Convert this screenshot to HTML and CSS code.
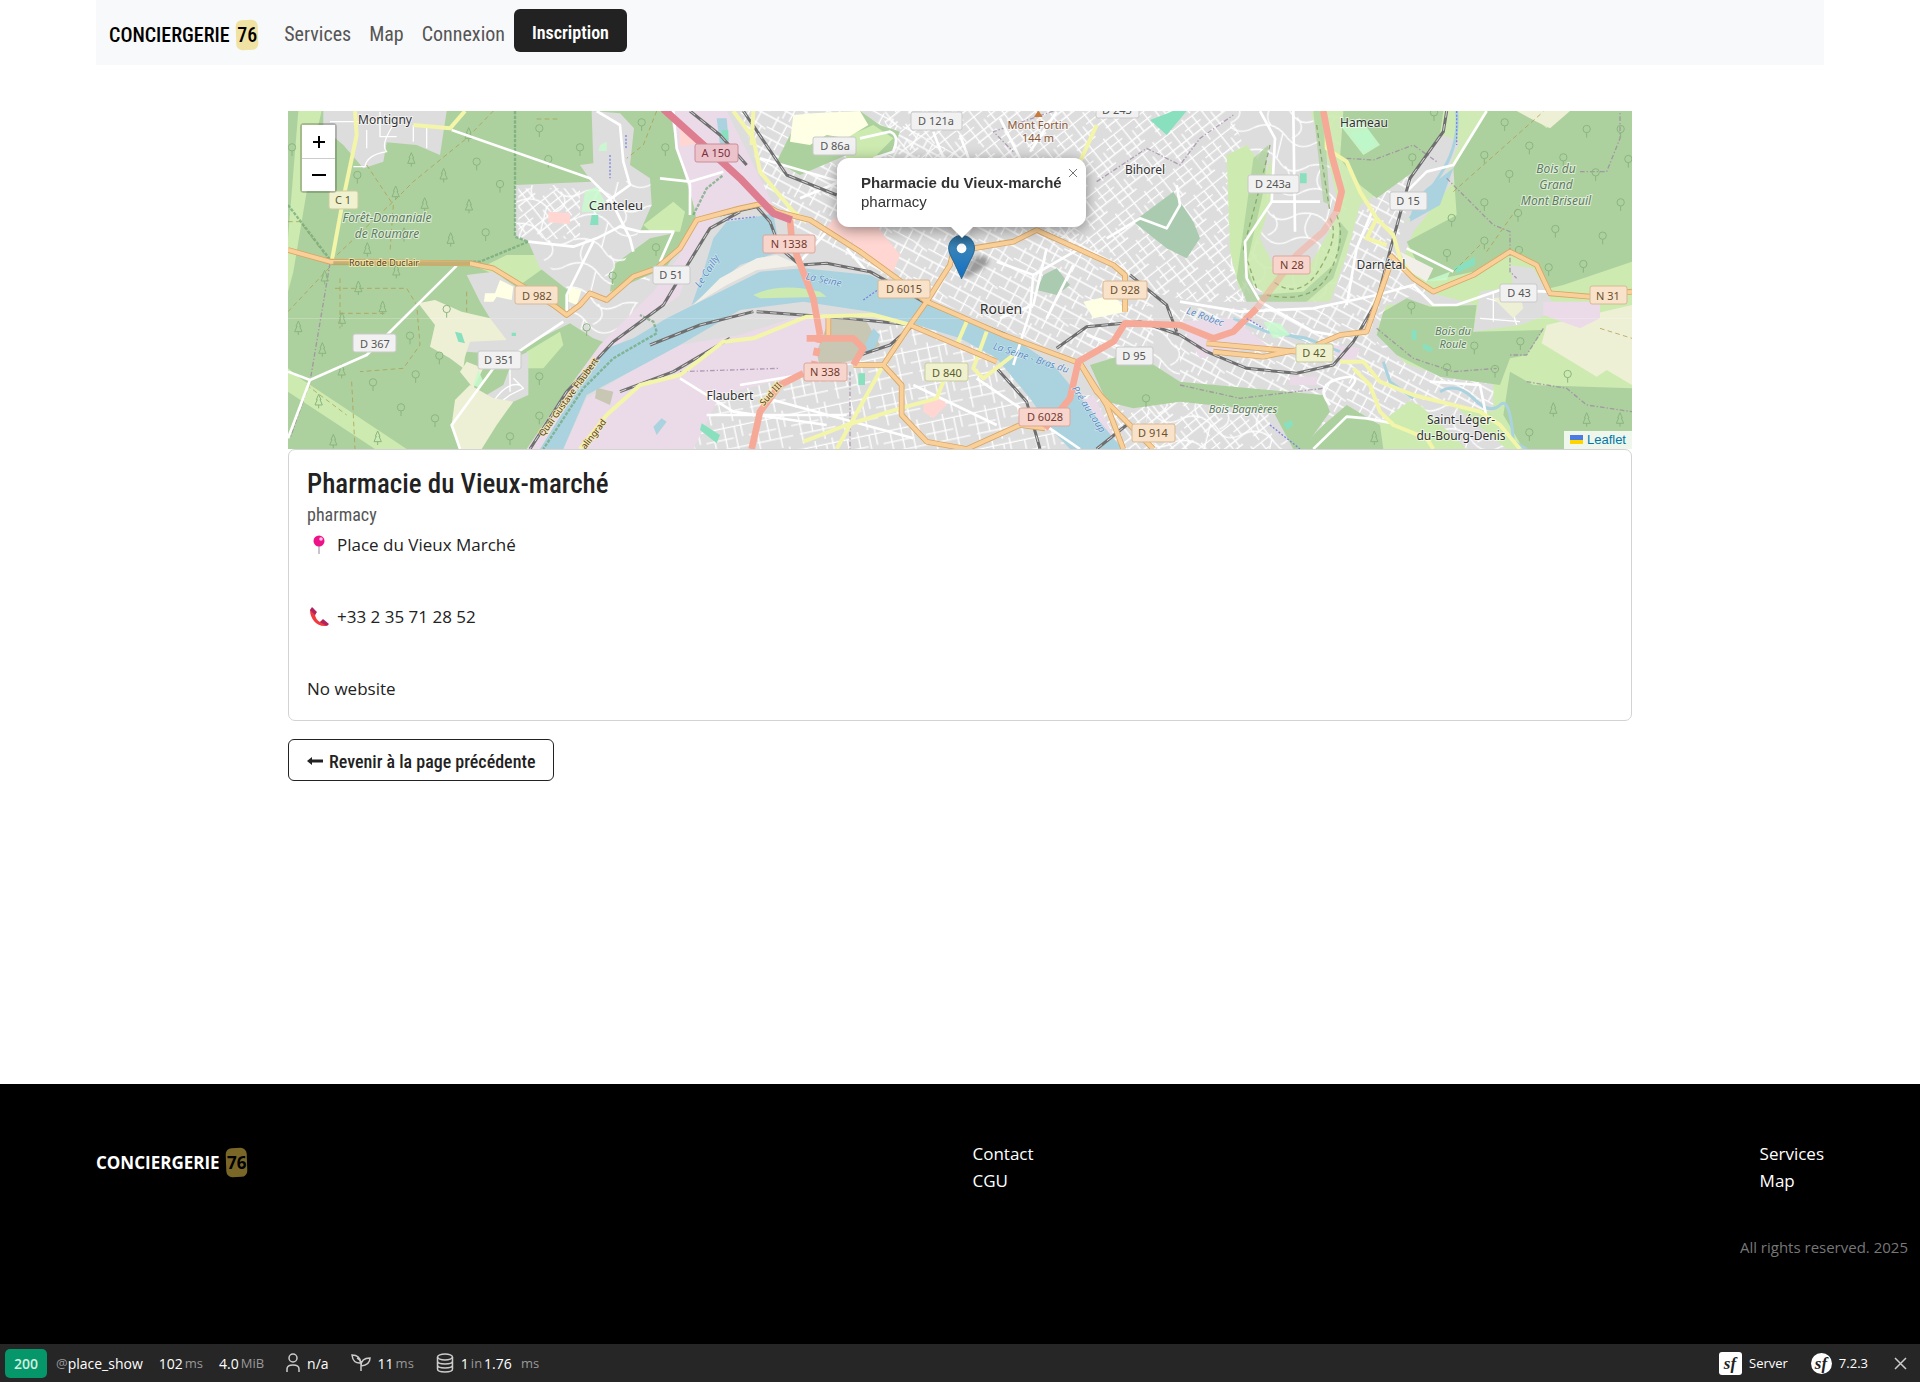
FILE: index.html
```html
<!DOCTYPE html>
<html lang="fr">
<head>
<meta charset="utf-8">
<meta name="viewport" content="width=device-width, initial-scale=1">
<title>Pharmacie du Vieux-marché</title>
<link rel="stylesheet" href="styles.css">
</head>
<body>
<header class="navbar">
  <a class="brand" href="#">CONCIERGERIE <span class="pill">76</span></a>
  <nav class="nav">
    <a href="#">Services</a>
    <a href="#">Map</a>
    <a href="#">Connexion</a>
  </nav>
  <button class="btn-dark" type="button">Inscription</button>
</header>

<main class="content">
  <section class="map" aria-label="Carte">
    <svg class="tiles" viewBox="8 6 1344 338" preserveAspectRatio="xMidYMid slice">
      <defs>
        <pattern id="streets" width="120" height="96" patternUnits="userSpaceOnUse" patternTransform="rotate(28)">
          <path d="M0 12H120M0 44H70L120 52M0 72H120M18 0V44M52 12V96M84 0V72M104 48V96M30 72V96" class="st"/>
        </pattern>
        <pattern id="streets2" width="110" height="100" patternUnits="userSpaceOnUse" patternTransform="rotate(-38)">
          <path d="M0 10H110M0 34H60M0 58H110M40 80H110M14 0V58M46 10V100M78 0V100M98 34V80" class="st"/>
        </pattern>
        <pattern id="streets3" width="130" height="110" patternUnits="userSpaceOnUse" patternTransform="rotate(-12)">
          <path d="M0 16H130M0 50H84M20 80H130M26 16V110M60 0V80M92 16V110M112 0V50" class="st"/>
        </pattern>
        <pattern id="streets4" width="190" height="150" patternUnits="userSpaceOnUse" patternTransform="rotate(14)">
          <path d="M0 30Q60 0 100 40T190 30M0 110Q50 70 100 110T190 110M40 20Q20 70 50 90M120 48Q160 80 120 112M90 106V150M90 0V34" class="st"/>
        </pattern>
        <g id="leaf"><circle cy="-8" r="11"/><path d="M0 3V18"/></g>
        <g id="pine"><path d="M0 -22L-7 -6H-4L-11 10H11L4 -6H7ZM0 10V20"/></g>
        <g id="tracks">
          <path d="M3500 18L3490 80L3390 220L3340 400L3290 590L3220 710L3160 780L3050 805L2900 790L2780 740L2700 690L2580 650L2420 665L2330 730"/>
          <path d="M1230 18L1320 90L1400 180M1390 18L1520 210L1670 270M1380 320L1290 370L1210 500L1150 600L1000 710L860 860L750 1032M1320 330L1430 305L1470 350L1500 430L1560 480L1640 475L1770 500L1930 590L2180 690M1430 620L1700 640L1900 660L1830 720L1740 750M1110 720L1260 660L1420 620M2150 790L2240 890L2280 1032M2450 1032L2540 960M1020 860L1180 800L1350 700M2550 510L2660 600L2690 680"/>
        </g>
      </defs>
      <g transform="scale(.333333)">
        <rect x="0" y="0" width="4080" height="1060" fill="#dedddd"/>
        <!-- street grids -->
        <path fill="url(#streets)" d="M1380 18H1800L2300 300L2620 560V760H2380L1900 560L1480 330Z"/>
        <path fill="url(#streets2)" d="M1800 18H2850L2960 300L2900 620L2600 560L2500 480L2300 380L1900 250Z"/>
        <path fill="url(#streets3)" d="M1260 860L1900 640L2160 760L2450 1060H1240Z"/>
        <path fill="url(#streets4)" d="M2600 600H3300L3700 860V1060H2600Z"/>
        <path fill="url(#streets2)" d="M2250 860L2960 900L2990 1060H2400Z"/>
        <path fill="url(#streets4)" d="M2850 18H3200V600H2850Z"/>
        <!-- light grass -->
        <g fill="#cdebb0">
          <path d="M3110 18H3700L3520 180L3420 320L3320 400L3200 590L2980 590L2900 520L2900 400L3000 60Z" opacity=".9"/>
          <path d="M3400 380L3560 180L3660 18H4056V1032H3680L3400 800L3290 680Z"/>
          <path d="M2840 150L2900 120L2960 200L2960 330L2900 470L2880 560L2850 440Z"/>
          <path d="M3250 840L3420 900L3560 1032H3300L3180 940Z"/>
        </g>
        <path fill="#dedddd" d="M2960 18H3090L3150 190L3180 320L3090 480L2990 500L2940 400L2980 250Z"/>
        <path fill="url(#streets4)" d="M2960 18H3090L3150 190L3180 320L3090 480L2990 500L2940 400L2980 250Z"/>
        <path fill="#dedddd" d="M3240 300L3400 200L3490 90L3540 110L3490 230L3370 360L3340 440L3440 560L3590 600H3300L3270 680L3330 760L3480 810L3640 830V920L3400 880L3290 960L3200 900L3140 960L3100 880L2700 840V590H3150L3200 450Z"/>
        <path fill="url(#streets)" d="M3240 300L3400 200L3370 360L3340 440L3440 560L3300 600L3270 680L3330 760L3480 810L3640 830V920L3400 880L3290 960L3200 900L3140 960L3100 880L2700 840V610H3150L3200 450Z"/>
        <!-- forest -->
        <g fill="#add19e">
          <path d="M24 18H1170L1190 130L1230 240L1250 350L1150 500L1050 640L960 740L850 880L750 1032H24Z"/>
          <path d="M3190 18H3490L3480 90L3400 200L3290 280L3240 240L3180 160Z"/>
          <path d="M3620 18H3740L3800 70L3850 18H4056V470L3850 540L3810 550L3760 480L3690 440L3580 500L3440 530L3380 410L3530 330L3520 190Z"/>
          <path d="M3310 620L3380 580L3450 605L3590 600L3580 680L3790 675L3740 750L3690 760L3660 840L3480 815L3350 750L3290 690Z"/>
          <path d="M3690 800L3760 840L4056 850V1032H3730L3670 930Z"/>
          <path d="M2430 780L2560 740L2700 830L3130 870L3150 920L3070 1032H3040L2980 920L2700 890L2560 910L2480 890Z"/>
          <path d="M1560 30L1740 18L1800 60L1860 80L1830 150L1700 150L1560 210L1490 170Z"/>
          <path d="M3130 960L3200 900L3300 960L3310 1032H3060Z"/>
          <path d="M2920 160L2965 120L2950 260L2900 480L2930 570L3070 560L3170 470L3180 350L3205 380L3160 520L3080 590H2900L2870 520Z" opacity=".8"/>
          <path d="M3100 18H3130L3150 300L3130 290Z" opacity=".7"/>
        </g>
        <g fill="#aacbaf"><path d="M2560 350L2680 260L2740 350L2760 400L2720 460L2660 430Z"/><path d="M2290 510L2330 490L2370 540L2330 570L2270 555Z"/></g>
        <g fill="#cdebb0">
          <path d="M55 18H125L110 80L40 500L24 560V400Z"/><path d="M24 790L60 820L380 1032H285L24 860Z"/>
          <path d="M600 490L680 450L770 450L790 490L720 540Z"/><path d="M1090 360L1180 290L1215 320L1200 380L1110 378Z"/>
          <path d="M840 680L850 720L790 790L735 790L740 740Z"/><path d="M1690 100L1780 60L1840 100L1760 180L1700 170Z"/>
        </g>
        <!-- Canteleu and Montigny -->
        <g fill="#dedddd">
          <path d="M935 18L1020 25L1062 70L1050 180L1110 220L1115 300L1080 380L1180 385L1110 400L1000 480L990 560L1120 505L1130 550L1050 640L980 715L940 700L870 655L740 720L690 750L560 740L545 690L630 640L600 590L560 510L640 500L730 560L860 620L870 560L780 490L745 410L705 395V240L935 230L900 180L940 175Z"/>
          <path d="M130 18H500L480 150L410 120L320 112L310 170L250 190L190 120L130 70Z"/>
          <path d="M700 760L745 740L745 870L700 890L640 910L620 870L670 840Z"/>
          <path d="M3690 480L3760 490L3800 560L3830 620L3720 660L3580 680L3600 560L3700 545Z"/>
        </g>
        <path fill="url(#streets4)" d="M705 240H935L1110 220L1115 300L990 560L1120 505L1050 640L980 715L870 655V560L745 410L705 395Z"/>
        <path fill="url(#streets2)" d="M715 250H900L900 400L745 405L715 390Z"/>
        <g class="st"><path d="M260 75V130M300 20V95H350M400 60V110M440 60V130M150 50H300M340 60Q300 120 320 140Q260 150 255 185H220M690 790V860M640 890Q680 830 720 840M650 900L690 870L730 850L700 820M3600 640L3720 650M3620 580L3700 600M3640 560V650M3680 560L3710 660"/></g>
        <!-- farmland -->
        <g fill="#eef0d5">
          <path d="M415 595L465 585L545 620L630 640L680 705L570 710L555 755L550 790L510 760L450 725L465 660Z"/>
          <path d="M540 800L560 770L610 790L580 850Z"/><path d="M525 885L570 840L640 880L700 890L650 960L605 1032H540L515 960Z"/>
          <path d="M3800 660L4056 600V840L3980 795L3950 815L3785 715Z"/><path d="M3710 18H3870L3810 70L3770 50Z"/><path d="M3640 580L3720 570L3730 610L3700 640Z"/>
        </g>
        <g fill="#ffffe5"><path d="M660 525L700 545L695 585L650 575L640 590L612 590L615 565L645 565Z"/><path d="M1600 25L1740 18L1765 60L1700 100L1640 90L1590 120L1530 110L1540 30Z"/><path d="M865 545L905 555L890 600L865 590Z"/><path d="M2410 590L2500 570L2540 620L2440 640Z"/></g>
        <!-- industrial -->
        <g fill="#ebdbe8">
          <path d="M1175 18H1340L1480 300L1400 310L1320 330L1250 420L1200 570L1060 670L960 790L800 1032H740L850 870L960 720L1120 560L1200 450L1250 330L1190 130Z"/>
          <path d="M1380 690L1600 620L1720 640L1600 800L1320 870L1240 1032H850L920 880L1050 800L1200 720Z"/>
          <path d="M2700 650L2860 640L2960 720L2760 760Z"/><path d="M3160 720L3240 730L3220 780L3170 760Z"/><path d="M3790 590L3960 590L3960 640L3900 670L3790 630Z"/><path d="M2390 900L2440 870L2520 1032H2460Z"/><path d="M3030 815H3110V840H3030Z"/>
        </g>
        <path fill="#ffd6d1" d="M805 320L870 325V358L805 352ZM1700 380L1780 350L1860 450L1840 500L1740 450ZM1660 340L1730 370L1710 420L1640 370ZM1930 890L1980 870L2000 900L1960 940L1930 920ZM1200 70L1280 110L1200 125Z"/>
        <path fill="#c7c7b4" d="M950 848L1000 860L990 900L945 880ZM1650 640L1760 650L1800 720L1740 760L1620 790L1610 740Z"/>
        <!-- water -->
        <g fill="#aad3df">
          <path d="M1300 400L1340 350L1380 345L1480 325L1500 440L1380 480L1320 530L1235 600L1270 500Z"/>
          <path d="M780 1032L880 870L980 730L1060 700L1160 640L1320 560L1440 500L1570 490L1770 510L1930 590L2170 680L2320 780L2420 900L2500 1000L2530 1032H2370L2320 980L2250 880L2150 760L2040 700L1880 650L1770 620L1570 590L1380 615L1200 720L1050 800L920 870L850 1032Z"/>
          <path d="M1310 40H1340L1350 150L1320 120ZM3400 290L3440 250L3520 190L3480 300L3390 350ZM3000 690Q3070 700 3130 740L3100 720L2990 670ZM1120 965L1145 940L1160 950L1130 990ZM1780 670L1800 690L1780 740L1740 750Z"/>
        </g>
        <path class="stream" d="M2860 640L2960 680L3080 700L3180 740M3480 860Q3530 830 3580 880T3660 900T3700 1010L3740 1032M3530 18Q3540 120 3480 210T3390 340M3310 770L3330 830L3400 880"/>
        <path fill="#f2efe9" d="M1240 600L1320 520L1430 460L1490 450L1560 480L1430 495L1340 540ZM3360 440L3460 490L3440 530L3390 500Z"/>
        <path fill="#cdebb0" d="M1420 570Q1500 530 1620 560L1640 575L1440 580Z"/>
        <!-- pitches, parks -->
        <g fill="#88e0be"><path d="M525 680L545 685L555 715L535 710ZM935 330H955V360H930ZM1325 75H1345V105H1325ZM695 683H708V693H695ZM3060 205H3080V235H3060ZM3215 85L3270 75L3285 120L3250 140ZM3520 490L3585 455V480L3530 505ZM3395 675H3410V705H3395ZM3430 715L3460 730L3450 742L3428 730ZM1735 805H1755V840H1735ZM1265 955L1320 990L1310 1015L1260 975ZM3010 955L3035 945L3040 960L3020 975ZM2610 45L2680 18H2720L2660 90Z"/></g>
        <g fill="#c8facc"><path d="M915 260L950 245L975 290L960 320H905L910 290ZM960 120L980 110V138H955ZM3430 530L3510 500L3500 525ZM580 840L595 795L610 830L600 850ZM2950 650L3000 655L3030 690L2980 700ZM3180 60L3240 40L3300 120L3250 150Z" opacity=".85"/></g>
        <!-- forest paths -->
        <path class="track" d="M24 350H60L150 470L360 270L400 230L560 100L640 18M260 180L340 300L330 440M165 550H380L410 600L420 720L370 790L240 800M165 470L24 620M180 520V670M215 830L225 1032M80 840L200 930M180 625H320M560 560L560 620M770 42H840M1130 18L1090 120L1040 160M3520 260L3790 20M3620 440L3690 340L3720 300M3600 420L3520 500M3960 670L4056 700"/>
        <path class="track dark" d="M3170 330Q3200 400 3150 500T2960 570M3110 60Q3130 200 3150 320M2970 120Q2940 250 2890 430L2930 550M3150 340Q3180 390 3120 490T2980 530"/>
        <path class="edge" d="M24 300L155 470M705 18V395L745 410L600 470L160 475M1130 680L1120 650L1080 630M1130 685L1000 760L910 850L790 1032M1240 330L1280 250L1330 210"/>
        <path class="bound" d="M150 475L90 830L30 1000M3200 160L3280 165L3400 120L3470 170M3500 220L3640 360L3690 380V500L3710 520M3790 670L3740 750L3690 750M3290 670L3400 760L3520 800L3650 790M3900 200H3980L4020 100V18M3740 830L3860 850L3920 900L4056 920M2700 840L2880 880L3130 850M2320 18L2140 80L2200 140M2450 230L2600 130L2700 180L2760 100L2860 30M1710 800V1032M1200 800L1500 790"/>
        <!-- trees -->
        <g class="trees">
          <use href="#leaf" x="36" y="135"/><use href="#leaf" x="232" y="218"/><use href="#leaf" x="590" y="178"/><use href="#leaf" x="660" y="245"/><use href="#leaf" x="778" y="78"/><use href="#leaf" x="900" y="135"/><use href="#leaf" x="805" y="170"/><use href="#leaf" x="617" y="390"/><use href="#leaf" x="390" y="700"/><use href="#leaf" x="500" y="620"/><use href="#leaf" x="279" y="840"/><use href="#leaf" x="407" y="816"/><use href="#leaf" x="363" y="915"/><use href="#leaf" x="465" y="948"/><use href="#leaf" x="478" y="760"/><use href="#leaf" x="690" y="1002"/><use href="#leaf" x="778" y="822"/><use href="#leaf" x="920" y="675"/><use href="#leaf" x="1156" y="135"/><use href="#leaf" x="1128" y="435"/><use href="#leaf" x="998" y="520"/><use href="#leaf" x="1085" y="60"/><use href="#leaf" x="778" y="940"/>
          <use href="#pine" x="394" y="165"/><use href="#pine" x="491" y="212"/><use href="#pine" x="347" y="265"/><use href="#pine" x="434" y="300"/><use href="#pine" x="567" y="305"/><use href="#pine" x="512" y="405"/><use href="#pine" x="262" y="435"/><use href="#pine" x="349" y="500"/><use href="#pine" x="235" y="550"/><use href="#pine" x="134" y="518"/><use href="#pine" x="308" y="610"/><use href="#pine" x="186" y="645"/><use href="#pine" x="55" y="670"/><use href="#pine" x="127" y="735"/><use href="#pine" x="185" y="800"/><use href="#pine" x="116" y="890"/><use href="#pine" x="293" y="1000"/><use href="#pine" x="160" y="1010"/><use href="#pine" x="566" y="90"/><use href="#pine" x="372" y="390"/>
          <use href="#leaf" x="3674" y="60"/><use href="#leaf" x="3748" y="130"/><use href="#leaf" x="3613" y="158"/><use href="#leaf" x="3688" y="215"/><use href="#leaf" x="3850" y="165"/><use href="#leaf" x="3920" y="80"/><use href="#leaf" x="3947" y="210"/><use href="#leaf" x="4022" y="300"/><use href="#leaf" x="4045" y="170"/><use href="#leaf" x="4022" y="80"/><use href="#leaf" x="3613" y="300"/><use href="#leaf" x="3714" y="332"/><use href="#leaf" x="3826" y="380"/><use href="#leaf" x="3968" y="400"/><use href="#leaf" x="3910" y="485"/><use href="#leaf" x="3806" y="495"/><use href="#leaf" x="3717" y="443"/><use href="#leaf" x="3613" y="415"/><use href="#leaf" x="3515" y="347"/><use href="#leaf" x="3501" y="452"/><use href="#leaf" x="3397" y="165"/><use href="#leaf" x="3394" y="610"/><use href="#leaf" x="3583" y="730"/><use href="#leaf" x="3721" y="717"/><use href="#leaf" x="3501" y="795"/><use href="#leaf" x="3645" y="800"/><use href="#leaf" x="3863" y="815"/><use href="#leaf" x="3748" y="990"/><use href="#leaf" x="3462" y="30"/><use href="#leaf" x="2598" y="888"/>
          <use href="#pine" x="3820" y="915"/><use href="#pine" x="3920" y="945"/><use href="#pine" x="4020" y="945"/><use href="#pine" x="3283" y="1000"/>
        </g>
        <!-- white roads -->
        <g class="road">
          <path d="M515 75L930 220L990 280L1050 400L1060 440"/><path d="M530 482L260 750L90 825L24 1000M90 825L24 800"/><path d="M850 650L640 790L515 960L540 1032"/><path d="M745 410L880 425L950 400L1020 365L1080 380L1180 380L1140 470"/><path d="M950 18L1020 60L1030 170L1050 240L980 290"/><path d="M860 620L860 570L940 410"/><path d="M1180 18L1190 130L1230 240V330M1140 220L1230 230L1330 200"/>
          <path d="M2940 18L2985 100L2975 290L2895 410L2900 520L2940 590L3100 680L3160 690M3040 18L3045 380M2975 290H3120"/><path d="M2700 590L2880 620L3100 610L3290 570"/><path d="M3620 18L3520 180L3440 200L3380 260"/><path d="M3290 570L3400 540L3460 600L3530 600L3660 555L3810 560"/><path d="M3100 1032L3200 935L3260 940L3340 955"/><path d="M3380 430L3520 500M3280 310L3230 430L3200 600"/><path d="M2150 470L2260 510L2250 620L2200 780M2260 510L2400 430M2420 690L2560 740M1380 840L1560 810M2300 640L2380 480M2480 400L2580 340L2660 370L2700 300L2690 240"/><path d="M2160 640L2260 600L2300 430M1560 470L1640 380M1700 430L1760 500M1460 880L1900 1000M1900 840L2150 960M2090 820L2400 1032M1280 930H1700M1200 820L1360 920L1640 960"/><path d="M1440 160L1680 230L1560 280M1740 100L1830 80Q1860 90 1840 140L1780 160M2040 90L2080 200M1960 80L1990 160M2160 40L2220 160M2250 140L2330 20"/><path d="M3200 860Q3260 800 3180 820T3150 900M3450 830L3600 840L3620 940"/>
        </g>
        <!-- rail -->
        <use href="#tracks" class="rail"/>
        <use href="#tracks" class="rail-dash"/>
        <!-- coloured roads, casing then fill -->
        <g class="road yellow">
          <path d="M225 18L230 90L190 280L155 470"/><path d="M555 18L510 70L400 60"/><path d="M900 1032L980 930L1080 840L1200 810L1330 710L1420 700L1580 635L1780 630L1890 660"/><path d="M1360 18L1420 100L1440 200L1540 320L1580 350M1420 18L1415 120"/><path d="M1670 1032L1810 780M1990 830L1970 880L1860 910L1700 960L1570 1010"/><path d="M2120 680L2080 790L2110 820L2200 750"/><path d="M3140 60L3140 130L3200 170L3240 260L3290 340L3340 390L3360 460L3400 520M3290 340L3260 400L3320 420"/><path d="M3180 770H3250L3300 830L3400 870L3600 920L3660 960L3720 1032"/><path d="M3220 790L3270 840L3300 920L3340 960L3440 1000L3460 1032"/><path d="M2450 60L2400 170"/><path d="M2060 650L2030 720"/>
        </g>
        <g class="case">
          <path d="M24 435L150 470L570 475L640 490L730 545L820 600L860 630L900 600L930 565L980 585L1060 515L1130 490L1200 430L1250 345L1380 310L1450 295L1530 345"/>
          <path d="M1490 320L1590 345L1740 440L1850 520L1940 590L2170 690L2400 775L2450 860L2540 950L2620 1032"/><path d="M1940 590L2010 480L2020 440L2200 410L2270 375L2500 480L2535 510V620"/><path d="M1940 590L1890 660L1810 780H1720M1810 780L1865 840V930L1940 1010L2060 1032L2220 960L2295 970M1890 660L2150 770M1645 640V690"/><path d="M3330 450L3400 520L3460 560L3580 510L3690 440L3770 480L3810 565L3930 575L4056 560"/><path d="M3330 480L3260 680L3180 690L3110 720M2780 715L3050 740M2800 740L2950 755L3050 735M2400 775L2480 900L2530 1032"/>
        </g>
        <g class="orange">
          <path d="M24 435L150 470L570 475L640 490L730 545L820 600L860 630L900 600L930 565L980 585L1060 515L1130 490L1200 430L1250 345L1380 310L1450 295L1530 345"/>
          <path d="M1490 320L1590 345L1740 440L1850 520L1940 590L2170 690L2400 775L2450 860L2540 950L2620 1032"/><path d="M1940 590L2010 480L2020 440L2200 410L2270 375L2500 480L2535 510V620"/><path d="M1940 590L1890 660L1810 780H1720M1810 780L1865 840V930L1940 1010L2060 1032L2220 960L2295 970M1890 660L2150 770M1645 640V690"/><path d="M3330 450L3400 520L3460 560L3580 510L3690 440L3770 480L3810 565L3930 575L4056 560"/><path d="M3330 480L3260 680L3180 690L3110 720M2780 715L3050 740M2800 740L2950 755L3050 735M2400 775L2480 900L2530 1032"/>
        </g>
        <path class="calm" d="M160 475H570"/>
        <g class="red">
          <path d="M1530 345L1535 400L1550 450L1600 580L1620 690M1580 700H1720L1750 730L1720 780M1570 805L1500 840L1440 920L1415 1032"/><path d="M2295 970L2370 880L2395 770L2500 710L2535 655L2700 660L2800 700L2860 680L2930 610"/><path d="M3170 320L3185 260L3155 150L3130 18"/>
          <path d="M2930 610L2990 530L3050 450L3130 380L3170 320" opacity=".5"/><path d="M1620 690L1600 790" stroke-dasharray="24 16"/>
        </g>
        <path class="motor" d="M1150 12L1320 165L1380 220L1480 325L1535 345"/>
        <path class="ferry" d="M1342 345L1430 335M1750 585L1800 550M2900 640L2950 670M2970 960L3060 1032M1038 90V130M990 150V220M3530 18V120"/>
        <path d="M24 640H4056" stroke="#fff" stroke-width="2" opacity=".35"/>
        <path fill="#c77a3c" d="M2275 16L2288 36H2262Z"/>
      </g>
      <!-- place names -->
      <g class="names">
        <text x="105" y="19">Montigny</text><text x="336" y="105" class="town">Canteleu</text><text x="450" y="295">Flaubert</text><text x="721" y="209" class="city">Rouen</text><text x="865" y="69">Bihorel</text><text x="1084" y="22">Hameau</text><text x="1101" y="164">Darnétal</text><text x="1181" y="319">Saint-Léger-</text><text x="1181" y="335">du-Bourg-Denis</text>
        <g class="peak"><text x="758" y="24">Mont Fortin</text><text x="758" y="37">144 m</text></g>
        <g class="wood"><text x="107" y="117">Forêt-Domaniale</text><text x="107" y="133">de Roumare</text><text x="1276" y="68">Bois du</text><text x="1276" y="84">Grand</text><text x="1276" y="100">Mont Briseuil</text><g class="small"><text x="1173" y="230">Bois du</text><text x="1173" y="243">Roule</text><text x="963" y="308">Bois Bagnères</text></g></g>
        <g class="way"><text x="104" y="161">Route de Duclair</text><text transform="rotate(-54 291 294)" x="291" y="294">Quai Gustave Flaubert</text><text transform="rotate(-52 316 331)" x="316" y="331">alingrad</text><text transform="rotate(-48 493 291)" x="493" y="291">Sud III</text></g>
        <g class="river"><text transform="rotate(-57 430 168)" x="430" y="168">Le Cailly</text><text transform="rotate(12 543 178)" x="543" y="178">La Seine</text><text transform="rotate(18 750 256)" x="750" y="256">La Seine - Bras du</text><text transform="rotate(57 806 306)" x="806" y="306">Pré au Loup</text><text transform="rotate(20 924 215)" x="924" y="215">Le Robec</text></g>
      </g>
      <!-- road shields -->
      <g class="shields">
        <g class="s-m"><rect x="415" y="39" width="43" height="18" rx="2"/><text x="436" y="52">A 150</text></g>
        <g class="s-y"><rect x="49" y="86" width="29" height="18" rx="2"/><text x="63" y="99">C 1</text><rect x="645" y="258" width="43" height="18" rx="2"/><text x="667" y="272">D 840</text><rect x="1016" y="239" width="37" height="18" rx="2"/><text x="1034" y="252">D 42</text></g>
        <g class="s-o"><rect x="235" y="181" width="43" height="18" rx="2"/><text x="257" y="195">D 982</text><rect x="598" y="175" width="52" height="18" rx="2"/><text x="624" y="188">D 6015</text><rect x="823" y="176" width="44" height="18" rx="2"/><text x="845" y="189">D 928</text><rect x="852" y="319" width="43" height="18" rx="2"/><text x="873" y="332">D 914</text><rect x="1310" y="181" width="37" height="18" rx="2"/><text x="1328" y="195">N 31</text></g>
        <g class="s-r"><rect x="483" y="130" width="52" height="18" rx="2"/><text x="509" y="143">N 1338</text><rect x="524" y="258" width="43" height="18" rx="2"/><text x="545" y="271">N 338</text><rect x="739" y="303" width="51" height="18" rx="2"/><text x="765" y="316">D 6028</text><rect x="993" y="151" width="37" height="18" rx="2"/><text x="1012" y="164">N 28</text></g>
        <g class="s-w"><rect x="373" y="161" width="37" height="18" rx="2"/><text x="391" y="174">D 51</text><rect x="73" y="229" width="43" height="18" rx="2"/><text x="95" y="243">D 367</text><rect x="198" y="246" width="43" height="18" rx="2"/><text x="219" y="259">D 351</text><rect x="631" y="7" width="51" height="18" rx="2"/><text x="656" y="20">D 121a</text><rect x="533" y="32" width="43" height="18" rx="2"/><text x="555" y="45">D 86a</text><rect x="816" y="-5" width="43" height="18" rx="2"/><text x="837" y="9">D 243</text><rect x="836" y="242" width="37" height="18" rx="2"/><text x="854" y="255">D 95</text><rect x="968" y="70" width="51" height="18" rx="2"/><text x="993" y="83">D 243a</text><rect x="1110" y="87" width="37" height="18" rx="2"/><text x="1128" y="100">D 15</text><rect x="1220" y="179" width="37" height="18" rx="2"/><text x="1239" y="192">D 43</text></g>
      </g>
    </svg>
    <div class="zoom">
      <button type="button" aria-label="Zoom in"><svg width="14" height="14" viewBox="0 0 14 14"><path d="M7 1V13M1 7H13"/></svg></button>
      <button type="button" aria-label="Zoom out"><svg width="14" height="14" viewBox="0 0 14 14"><path d="M0 7H14"/></svg></button>
    </div>
    <svg class="pin" viewBox="0 0 50 41">
      <defs>
        <linearGradient id="pinfill" x2="0" y2="1"><stop offset="0" stop-color="#2e6c97"/><stop offset=".3" stop-color="#3883b7"/><stop offset="1" stop-color="#126fc6"/></linearGradient>
        <filter id="soft"><feGaussianBlur stdDeviation="2"/></filter>
      </defs>
      <path d="M13 41L22 22Q34 16 38 24Q36 32 13 41Z" opacity=".3" filter="url(#soft)"/>
      <path d="M12.500 .5C5.500 .5 .5 6 .5 12.500C.5 17 3 20.500 5 24.500L12.500 40.500L20 24.500C22 20.500 24.500 17 24.500 12.500C24.500 6 19.500 .5 12.500 .5Z" fill="url(#pinfill)" stroke="#2e6c97"/>
      <circle cx="12.500" cy="12.500" r="4.500" fill="#fff"/>
    </svg>
    <div class="popup">
      <button class="popup-close" type="button" aria-label="Close popup"><svg width="10" height="10" viewBox="0 0 10 10"><path d="M1 1L9 9M9 1L1 9"/></svg></button>
      <strong>Pharmacie du Vieux-marché</strong><br>pharmacy
    </div>
    <a class="credit" href="#"><svg width="13" height="9" viewBox="0 0 13 9"><path fill="#4c7be1" d="M0 0H13V5H0Z"/><path fill="#ffd500" d="M0 5H13V9H0Z"/></svg>Leaflet</a>
  </section>

  <article class="card">
    <h1>Pharmacie du Vieux-marché</h1>
    <h2>pharmacy</h2>
    <p><svg class="emoji" viewBox="0 0 24 24"><path d="M12 11V21" stroke="#c9c3cf" stroke-width="2"/><circle cx="12" cy="8" r="5.500" fill="#ee1289"/><circle cx="14" cy="6" r="1.800" fill="#ffc4e4"/></svg>Place du Vieux Marché</p>
    <p><svg class="emoji" viewBox="0 0 24 24"><path d="M3 5C3 14 10 22 19 21L21 19L16 15L13 17Q9 15 8 10L9 8L6 3Z" fill="#f03a3e"/><path d="M3 5L5 2L10 7L8 10ZM13 17L16 14L22 19L20 21Z" fill="#b0235f"/></svg>+33 2 35 71 28 52</p>
    <p>No website</p>
  </article>
  <button class="btn-outline" type="button"><svg width="16" height="8" viewBox="0 0 16 8"><path d="M0 4L5 0V2.500H16V5.500H5V8Z" fill="#222"/></svg>Revenir à la page précédente</button>
</main>

<footer class="footer">
  <div class="footer-row">
    <a class="footer-brand" href="#">CONCIERGERIE <span class="pill">76</span></a>
    <div class="links"><a href="#">Contact</a><a href="#">CGU</a></div>
    <div class="links"><a href="#">Services</a><a href="#">Map</a></div>
  </div>
  <p class="rights">All rights reserved. 2025</p>
</footer>

<div class="toolbar">
  <span class="status">200</span>
  <span class="t-route"><i>@</i>place_show</span>
  <span class="t-time">102 <i>ms</i></span>
  <span class="t-mem">4.0 <i>MiB</i></span>
  <span class="t-user"><svg width="14" height="20" viewBox="0 0 14 20"><circle cx="7" cy="5" r="4"/><path d="M1 19V16Q1 12 7 12T13 16V19"/></svg>n/a</span>
  <span class="t-twig"><svg width="20" height="18" viewBox="0 0 20 18"><path d="M10 17V9Q9 5 6 4M10 9Q2 10 1 1Q9 1 10 9ZM10 12Q10 4 19 4Q19 11 10 12Z"/></svg>11 <i>ms</i></span>
  <span class="t-db"><svg width="18" height="20" viewBox="0 0 18 20"><ellipse cx="9" cy="4" rx="7.500" ry="3"/><path d="M1.500 4V16C1.500 20 16.500 20 16.500 16V4M1.500 8C1.500 12 16.500 12 16.500 8M1.500 12C1.500 16 16.500 16 16.500 12"/></svg>1 <i>in</i> 1.76 &nbsp;<i>ms</i></span>
  <span class="t-server"><svg class="sf" width="23" height="23" viewBox="0 0 23 23"><rect width="23" height="23" rx="3"/><text x="11" y="17">sf</text></svg>Server</span>
  <span class="t-version"><svg class="sf" width="21" height="21" viewBox="0 0 21 21"><circle cx="10.500" cy="10.500" r="10.500"/><text x="10" y="16">sf</text></svg>7.2.3</span>
  <button class="t-close" type="button" aria-label="Close"><svg width="13" height="13" viewBox="0 0 13 13"><path d="M1 1L12 12M12 1L1 12"/></svg></button>
</div>
</body>
</html>
```
FILE: styles.css
```css
* { box-sizing: border-box; }
body {
  margin: 0;
  min-height: 100vh;
  display: flex;
  flex-direction: column;
  font: 17px/27px "Open Sans", "Noto Sans", sans-serif;
  color: #222;
  background: #fff;
}
a { color: inherit; text-decoration: none; }
button { margin: 0; padding: 0; border: 0; font: inherit; cursor: pointer; }
p, h1, h2 { margin: 0; }

.navbar, .btn-outline, .card h1, .card h2 {
  font-family: "Liberation Sans Narrow", "Roboto Condensed", "Roboto", sans-serif;
}
.navbar {
  display: flex;
  align-items: flex-start;
  width: 90%;
  height: 65px;
  margin: 0 auto;
  padding: 9px 13px;
  background: #f8f9fa;
  font-size: 20px;
}
.brand { margin-right: 18px; padding-top: 13px; color: #000; font-weight: 500; }
.pill { position: relative; z-index: 0; margin-left: 3px; }
.pill::before {
  content: "";
  position: absolute;
  z-index: -1;
  inset: -3px -1px;
  border-radius: 6px;
  background: #f0e2a3;
  transform: rotate(-2deg);
}
.nav { display: flex; padding-top: 12px; color: #555; }
.nav a { padding: 0 9px; }
.btn-dark {
  height: 43px;
  padding: 3px 18px 0;
  border-radius: 6px;
  background: #222;
  color: #fff;
  font-size: 18px;
  font-weight: 600;
}

.content { flex: 1; width: 70%; margin: 46px auto 0; }
.map { position: relative; height: 338px; overflow: hidden; background: #dedddd; font: 13px/19px "Liberation Sans", Arial, sans-serif; }
.tiles { display: block; width: 100%; height: 100%; }
.tiles path { stroke-linejoin: round; }
.st { fill: none; stroke: #fff; stroke-width: 4; }
.stream { fill: none; stroke: #aad3df; stroke-width: 9; }
.track { fill: none; stroke: #ad9a4c; stroke-width: 3; stroke-dasharray: 14 10; opacity: .75; }
.track.dark { stroke: #7d9a58; stroke-width: 4; }
.edge { fill: none; stroke: #6fa578; stroke-width: 7; stroke-dasharray: 10 4; opacity: .7; }
.bound { fill: none; stroke: #9d86a3; stroke-width: 4; stroke-dasharray: 14 6 4 6; opacity: .75; }
.trees { fill: none; stroke: #8bb580; stroke-width: 3; }
.road { fill: none; stroke: #fff; stroke-width: 8; }
.road.yellow { stroke: #f3f5a9; stroke-width: 12; }
.rail { fill: none; stroke: #6f6f6f; stroke-width: 9; }
.rail-dash { fill: none; stroke: #d5d5d5; stroke-width: 3; stroke-dasharray: 20 20; }
.case, .orange, .red, .motor, .calm, .ferry { fill: none; }
.case { stroke: #d9a765; stroke-width: 17; }
.orange { stroke: #fad09a; stroke-width: 12; }
.calm { stroke: #b5a768; stroke-width: 12; opacity: .8; }
.red { stroke: #f7a997; stroke-width: 20; }
.motor { stroke: #de7d90; stroke-width: 22; }
.ferry { stroke: #7c83e0; stroke-width: 4; stroke-dasharray: 6 5; }
.names text, .shields text { text-anchor: middle; }
.names { font: 12px "Noto Sans", sans-serif; fill: #333; stroke: #ffffff99; stroke-width: 2px; paint-order: stroke; }
.names .town { font-size: 13px; }
.names .city { font-size: 14px; }
.peak { font-size: 11px; fill: #8a5733; }
.wood { font-style: italic; fill: #5c7c5b; }
.wood .small { font-size: 11px; }
.way { font-size: 9px; fill: #5a3e22; stroke: #f4ecaecc; }
.river { font-size: 10px; font-style: italic; fill: #5b8cc4; stroke-width: 1px; }
.shields { font: 11px "Noto Sans", sans-serif; }
.shields rect { stroke-width: 1; }
.s-m rect { fill: #ecc3ca; stroke: #cd8c98; } .s-m text { fill: #7c2f43; }
.s-y rect { fill: #f0f2cf; stroke: #c9cba0; } .s-y text { fill: #5c5c30; }
.s-o rect { fill: #f8e3ca; stroke: #d8b892; } .s-o text { fill: #6e5030; }
.s-r rect { fill: #f7d5cd; stroke: #dba79b; } .s-r text { fill: #74382e; }
.s-w rect { fill: #f1f1f1; stroke: #c9c9c9; } .s-w text { fill: #555; }

.zoom { position: absolute; top: 12px; left: 12px; width: 37px; border: 2px solid #00000033; border-radius: 4px; background-clip: padding-box; }
.zoom button { display: grid; place-items: center; width: 100%; height: 33px; background: #fff; }
.zoom button + button { border-top: 1px solid #ccc; }
.zoom path { stroke: #000; stroke-width: 2; }
.pin { position: absolute; top: 124px; left: calc(50% - 12px); width: 54px; height: 44px; }
.popup {
  position: absolute;
  top: 47px;
  left: calc(50% - 123px);
  width: 249px;
  height: 69px;
  padding: 15px 0 0 24px;
  border-radius: 12px;
  background: #fff;
  color: #333;
  font-size: 15px;
  white-space: nowrap;
  filter: drop-shadow(0 3px 7px #00000066);
}
.popup::after {
  content: "";
  position: absolute;
  top: 100%;
  left: calc(50% - 11px);
  border: 11px solid transparent;
  border-top-color: #fff;
  border-bottom: 0;
}
.popup-close { position: absolute; top: 10px; right: 8px; display: grid; background: none; }
.popup-close path { stroke: #757575; stroke-width: 1; }
.credit { position: absolute; right: 0; bottom: 0; padding: 0 6px; background: #ffffffcc; color: #0078a8; line-height: 18px; }
.credit svg { margin-right: 4px; }

.card { padding: 18px; border: 1px solid #d3d3d3; border-radius: 7px; }
.card h1 { margin-bottom: 4px; font-size: 27px; line-height: 32px; font-weight: 500; }
.card h2 { margin-bottom: 6px; font-size: 18px; line-height: 21px; font-weight: 400; color: #555; }
.card p + p { margin-top: 45px; }
.emoji { width: 24px; height: 24px; margin-right: 6px; vertical-align: -6px; }
.btn-outline {
  display: flex;
  align-items: center;
  gap: 6px;
  height: 42px;
  margin-top: 18px;
  padding: 2px 18px 0;
  border: 1px solid #222;
  border-radius: 6px;
  background: #fff;
  color: #222;
  font-size: 18px;
  font-weight: 500;
}

.footer { height: 298px; padding-top: 56px; background: #000; color: #fff; }
.footer-row { display: flex; justify-content: space-between; width: 90%; margin: 0 auto; }
.footer-brand { padding-top: 9px; font-weight: 700; }
.footer-brand .pill { color: #000; }
.footer-brand .pill::before { background: #7a6728; }
.links { display: flex; flex-direction: column; }
.rights { margin-top: 40px; padding-right: 12px; font-size: 15px; text-align: right; color: #777; }

.toolbar {
  position: fixed;
  inset: auto 0 0;
  display: flex;
  align-items: center;
  height: 38px;
  padding: 0 13px 0 5px;
  background: #262626;
  color: #fff;
  font-size: 14px;
}
.toolbar i { font-style: normal; font-size: 13px; color: #999; }
.toolbar span { display: flex; align-items: center; gap: 2px; white-space: nowrap; }
.toolbar svg { fill: none; stroke: #ccc; stroke-width: 1.5px; }
.status { width: 42px; height: 29px; justify-content: center; border-radius: 5px; background: #059669; color: #cfeee0; font-weight: 600; }
.toolbar .t-route { gap: 0; margin-left: 9px; }
.t-time, .t-mem { margin-left: 16px; }
.t-user, .t-twig, .t-db { margin-left: 22px; }
.t-user svg, .t-twig svg, .t-db svg { margin-right: 5px; }
.t-server { margin-left: auto; }
.t-version { margin-left: 23px; }
.t-server, .t-version { font-size: 13px; }
.toolbar .sf { margin-right: 5px; fill: #fff; stroke: none; }
.sf text { font: italic 700 17px "Liberation Serif", serif; fill: #222; text-anchor: middle; }
.t-close { display: grid; margin-left: 26px; background: none; }
```
